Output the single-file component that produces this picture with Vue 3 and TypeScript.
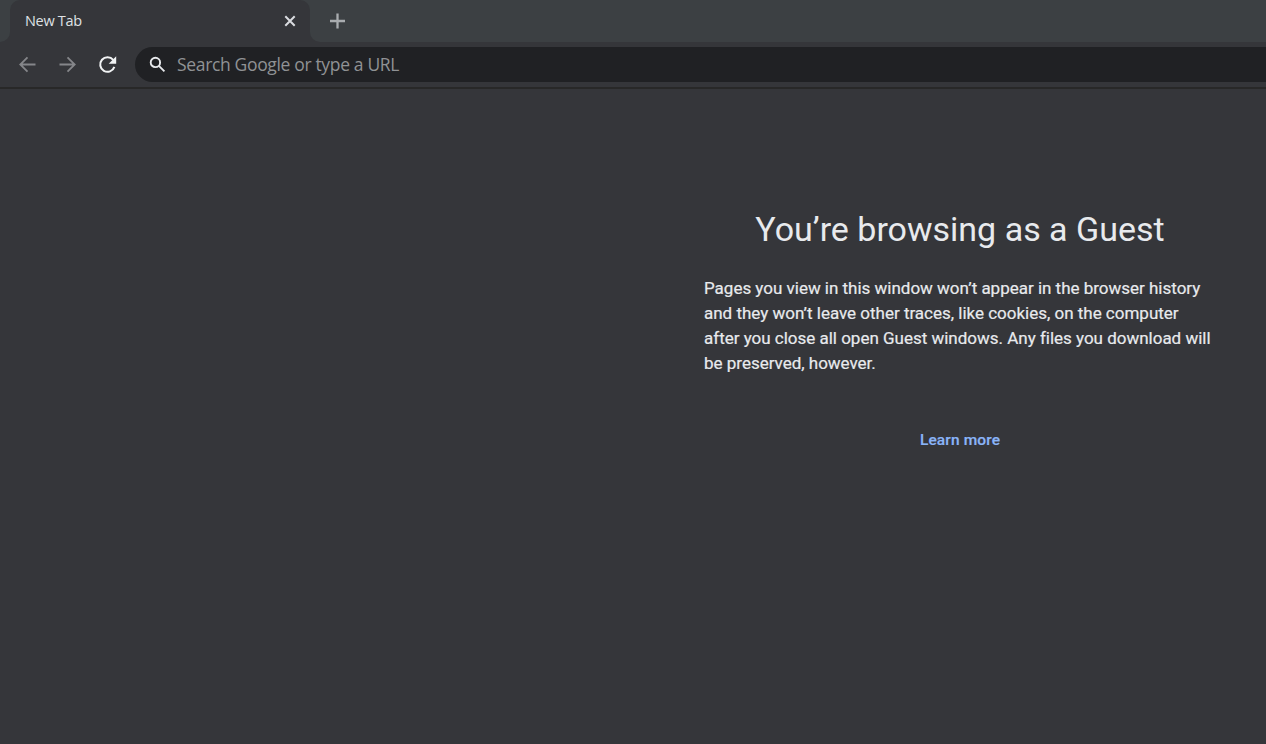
<script setup lang="ts">
const tabTitle: string = 'New Tab'
const placeholder: string = 'Search Google or type a URL'
const description: string[] = [
  'Pages you view in this window won’t appear in the browser history',
  'and they won’t leave other traces, like cookies, on the computer',
  'after you close all open Guest windows. Any files you download will',
  'be preserved, however.',
]
</script>

<template>
  <div class="window">
    <header class="tab-strip">
      <div class="strip-start"></div>
      <div class="tab">
        <span class="tab-title">{{ tabTitle }}</span>
        <svg class="close" width="12" height="12" viewBox="0 0 12 12">
          <path d="M1.3 1.3 10.7 10.7M10.7 1.3 1.3 10.7" />
        </svg>
      </div>
      <div class="strip-end">
        <svg class="plus" width="16" height="16" viewBox="0 0 16 16">
          <path d="M8.5 .5V15.5M1 8H16" />
        </svg>
      </div>
    </header>

    <nav class="toolbar">
      <svg class="nav-icon dim" width="20" height="20" viewBox="0 0 20 20">
        <path d="M18.5 9.5H3.5M10.5 2.3 3.3 9.5 10.5 16.7" />
      </svg>
      <svg class="nav-icon dim" width="20" height="20" viewBox="0 0 20 20">
        <path d="M2.5 9.5H17.5M10.5 2.3 17.7 9.5 10.5 16.7" />
      </svg>
      <svg class="nav-icon" width="20" height="20" viewBox="0 0 20 20">
        <path class="arc" d="M16.2 4.9A7.3 7.3 0 1 0 17.4 11.9" />
        <path class="head" d="M19.2 1.2V8.7H11.7Z" />
      </svg>
      <div class="omnibox">
        <svg class="search" width="18" height="18" viewBox="0 0 18 18">
          <circle cx="6.4" cy="6.4" r="4.7" />
          <path d="M9.9 9.9 15.4 15.4" />
        </svg>
        <span class="placeholder">{{ placeholder }}</span>
      </div>
    </nav>

    <main class="page">
      <section class="guest">
        <h1>You’re browsing as a Guest</h1>
        <p>
          <span v-for="line in description" :key="line" class="line">{{ line }}</span>
        </p>
        <a class="learn">Learn more</a>
      </section>
    </main>
  </div>
</template>

<style>
body {
  margin: 0;
  background: #35363a;
}
</style>

<style scoped>
.window {
  display: flex;
  flex-direction: column;
  width: 1266px;
  height: 744px;
  overflow: hidden;
  background: #35363a;
  font-family: Roboto, sans-serif;
}
svg {
  display: block;
  flex: none;
  fill: none;
}
.tab-strip {
  display: flex;
  height: 42px;
  flex: none;
  background: linear-gradient(#3c4043 0 12px, #35363a 12px);
}
.strip-start {
  width: 10px;
  background: #3c4043;
  border-bottom-right-radius: 10px;
}
.tab {
  display: flex;
  align-items: center;
  justify-content: space-between;
  box-sizing: border-box;
  width: 300px;
  padding: 0 14px 0 15px;
  background: #35363a;
  border-radius: 10px 10px 0 0;
}
.tab-title {
  font: 14.5px/20px "Open Sans", sans-serif;
  letter-spacing: -0.3px;
  color: #dfe1e5;
}
.close path {
  stroke: #dadce0;
  stroke-width: 2;
}
.strip-end {
  display: flex;
  align-items: center;
  flex: 1;
  padding-left: 19px;
  background: #3c4043;
  border-bottom-left-radius: 10px;
}
.plus path {
  stroke: #a9acaf;
  stroke-width: 2.3;
}
.toolbar {
  display: flex;
  align-items: center;
  box-sizing: border-box;
  height: 47px;
  flex: none;
  padding: 0 0 0 17px;
  border-bottom: 2px solid #282828;
}
.nav-icon {
  margin-right: 20px;
}
.nav-icon path {
  stroke: #f1f3f4;
  stroke-width: 2;
}
.nav-icon.dim path {
  stroke: #85868a;
  stroke-width: 1.8;
}
.nav-icon .head {
  fill: #f1f3f4;
  stroke: none;
}
.omnibox {
  display: flex;
  align-items: center;
  flex: 1;
  height: 35px;
  margin-left: -2px;
  padding-left: 14px;
  background: #202124;
  border-radius: 18px 0 0 18px;
}
.search circle,
.search path {
  stroke: #e8eaed;
  stroke-width: 1.9;
}
.placeholder {
  margin-left: 10px;
  padding-bottom: 2px;
  font: 17.5px/24px "Open Sans", sans-serif;
  letter-spacing: -0.34px;
  color: #909295;
  white-space: nowrap;
}
.page {
  display: flex;
  flex: 1;
}
.guest {
  display: flex;
  flex-direction: column;
  align-items: center;
  width: 512px;
  margin: 120px 0 0 704px;
  color: #e8eaed;
}
h1 {
  margin: 0;
  font-size: 34px;
  line-height: 40px;
  font-weight: 400;
  white-space: nowrap;
}
p {
  align-self: stretch;
  margin: 27px 0 0;
  font-size: 17px;
  line-height: 25px;
}
.line {
  display: block;
  white-space: nowrap;
  letter-spacing: -0.01px;
  -webkit-text-stroke: 0.2px currentColor;
}
.learn {
  margin-top: 54px;
  font-size: 15.5px;
  line-height: 20px;
  font-weight: 500;
  letter-spacing: 0.13px;
  color: #8ab4f8;
  -webkit-text-stroke: 0.2px currentColor;
}
</style>
